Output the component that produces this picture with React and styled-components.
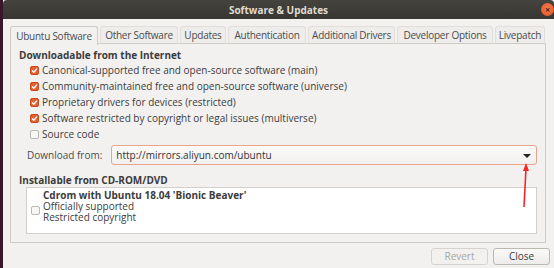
import styled, { createGlobalStyle } from "styled-components";

const GlobalStyle = createGlobalStyle`
  html, body {
    margin: 0;
    padding: 0;
    background: #3a1628;
    overflow: hidden;
  }
  * { box-sizing: border-box; }
`;

const Window = styled.div`
  margin-left: 3px;
  width: 551px;
  height: 268px;
  background: #f2f1f0;
  display: flex;
  flex-direction: column;
  font-family: "Open Sans", "DejaVu Sans", sans-serif;
  font-size: 10px;
  color: #3c3c3c;
`;

const TitleBar = styled.div`
  height: 19px;
  flex: none;
  display: grid;
  grid-template-columns: 1fr auto 1fr;
  align-items: center;
  background: linear-gradient(#45433e, #383632);
  border-radius: 4px 4px 0 0;
`;

const Title = styled.div`
  grid-column: 2;
  font-weight: 700;
  font-size: 10px;
  color: #dfdbd2;
`;

const CloseDot = styled.div`
  grid-column: 3;
  justify-self: end;
  margin-right: 0px;
  width: 13px;
  height: 13px;
  border-radius: 50%;
  background: radial-gradient(circle at 50% 40%, #f47a4f, #e4531e);
  display: flex;
  align-items: center;
  justify-content: center;
  color: #3a2a22;
  font-size: 9px;
  font-weight: 700;
  line-height: 1;
`;

const Body = styled.div`
  flex: 1;
  display: flex;
  flex-direction: column;
  padding: 7px 8px 0 7px;
`;

const Tabs = styled.div`
  display: flex;
  gap: 2px;
  height: 18px;
  position: relative;
  z-index: 1;
`;

const Tab = styled.div`
  width: ${(p) => p.w}px;
  flex: none;
  height: ${(p) => (p.active ? "19px" : "18px")};
  display: flex;
  align-items: center;
  justify-content: center;
  border: 1px solid ${(p) => (p.active ? "#cfcbc6" : "#e2dfdb")};
  border-bottom: ${(p) => (p.active ? "none" : "1px solid #cfcbc6")};
  border-radius: 3px 3px 0 0;
  background: ${(p) => (p.active ? "#f2f1f0" : "#eeedeb")};
  color: #4c4c4c;
  white-space: nowrap;
  letter-spacing: -0.25px;
`;

const Panel = styled.div`
  margin-top: -1px;
  height: 200px;
  border: 1px solid #cfcbc6;
  display: flex;
  flex-direction: column;
  padding: 4px 8px 0 8px;
`;

const Section = styled.div`
  font-weight: 700;
  height: 14px;
  line-height: 14px;
  color: #3c3c3c;
  margin-top: ${(p) => p.top || 0}px;
`;

const Options = styled.div`
  display: flex;
  flex-direction: column;
  padding-left: 11px;
`;

const Option = styled.label`
  display: flex;
  align-items: center;
  height: 16px;
  gap: 3px;
`;

const Box = styled.span`
  width: 9px;
  height: 9px;
  border-radius: 2px;
  flex: none;
  border: 1px solid ${(p) => (p.checked ? "#c9481b" : "#bcb8b3")};
  background: ${(p) => (p.checked ? "#e4602f" : "#f7f7f6")};
  display: flex;
  align-items: center;
  justify-content: center;
`;

const DownloadRow = styled.div`
  display: flex;
  align-items: center;
  margin-top: 3px;
  padding-left: 8px;
  gap: 9px;
`;

const Label = styled.span`
  color: #4c4c4c;
`;

const Combo = styled.div`
  flex: 1;
  height: 20px;
  border: 1px solid #eaa48c;
  border-radius: 3px;
  background: linear-gradient(#fbfbfa, #f1f0ee);
  display: flex;
  align-items: center;
  justify-content: space-between;
  padding: 0 5px 0 4px;
  color: #333;
`;

const Caret = styled.span`
  width: 0;
  height: 0;
  border-left: 4px solid transparent;
  border-right: 4px solid transparent;
  border-top: 4px solid #222;
  margin-top: 1px;
`;

const ListBox = styled.div`
  margin: 0 0 0 7px;
  height: 47px;
  background: #fff;
  border: 1px solid #d3d0cb;
  display: flex;
  align-items: center;
  padding-left: 4px;
  gap: 3px;
`;

const ListText = styled.div`
  display: flex;
  flex-direction: column;
  line-height: 11px;
  color: #3c3c3c;
  margin-top: -8px;
`;

const Strong = styled.span`
  font-weight: 700;
`;

const Footer = styled.div`
  display: flex;
  justify-content: flex-end;
  gap: 5px;
  padding: 5px 0 0 0;
  margin-right: -4px;
`;

const Button = styled.button`
  width: 57px;
  height: 17px;
  padding: 0;
  font: inherit;
  font-size: 10px;
  border-radius: 3px;
  border: 1px solid ${(p) => (p.disabled ? "#d6d3cf" : "#bcb8b2")};
  background: ${(p) =>
    p.disabled ? "#f2f1f0" : "linear-gradient(#fafaf9, #edecea)"};
  color: ${(p) => (p.disabled ? "#a8a5a1" : "#3c3c3c")};
  line-height: 15px;
`;

const Annotation = styled.svg`
  position: absolute;
  left: 516px;
  top: 160px;
  pointer-events: none;
`;

const Check = () => (
  <svg width="7" height="7" viewBox="0 0 7 7">
    <path d="M1 3.6 L2.8 5.3 L6 1.6" fill="none" stroke="#fff" strokeWidth="1.4" />
  </svg>
);

const options = [
  { text: "Canonical-supported free and open-source software (main)", checked: true },
  { text: "Community-maintained free and open-source software (universe)", checked: true },
  { text: "Proprietary drivers for devices (restricted)", checked: true },
  { text: "Software restricted by copyright or legal issues (multiverse)", checked: true },
  { text: "Source code", checked: false },
];

const tabs = [
  { label: "Ubuntu Software", w: 88 },
  { label: "Other Software", w: 78 },
  { label: "Updates", w: 46 },
  { label: "Authentication", w: 78 },
  { label: "Additional Drivers", w: 87 },
  { label: "Developer Options", w: 96 },
  { label: "Livepatch", w: 50 },
];

export default function App() {
  return (
    <>
      <GlobalStyle />
      <Window>
        <TitleBar>
          <Title>Software &amp; Updates</Title>
          <CloseDot>×</CloseDot>
        </TitleBar>
        <Body>
          <Tabs>
            {tabs.map((t, i) => (
              <Tab key={t.label} w={t.w} active={i === 0}>
                {t.label}
              </Tab>
            ))}
          </Tabs>
          <Panel>
            <Section>Downloadable from the Internet</Section>
            <Options>
              {options.map((o) => (
                <Option key={o.text}>
                  <Box checked={o.checked}>{o.checked && <Check />}</Box>
                  {o.text}
                </Option>
              ))}
            </Options>
            <DownloadRow>
              <Label>Download from:</Label>
              <Combo>
                http://mirrors.aliyun.com/ubuntu
                <Caret />
              </Combo>
            </DownloadRow>
            <Section top={8}>Installable from CD-ROM/DVD</Section>
            <ListBox>
              <Box />
              <ListText>
                <Strong>Cdrom with Ubuntu 18.04 'Bionic Beaver'</Strong>
                <span>Officially supported</span>
                <span>Restricted copyright</span>
              </ListText>
            </ListBox>
          </Panel>
          <Footer>
            <Button disabled>Revert</Button>
            <Button>Close</Button>
          </Footer>
        </Body>
      </Window>
      <Annotation width="20" height="50" viewBox="0 0 20 50">
        <path d="M8 47 L10 8" stroke="#f5262a" strokeWidth="1.6" fill="none" />
        <path d="M10 3 L7 11 L13 11 Z" fill="#f5262a" />
      </Annotation>
    </>
  );
}
